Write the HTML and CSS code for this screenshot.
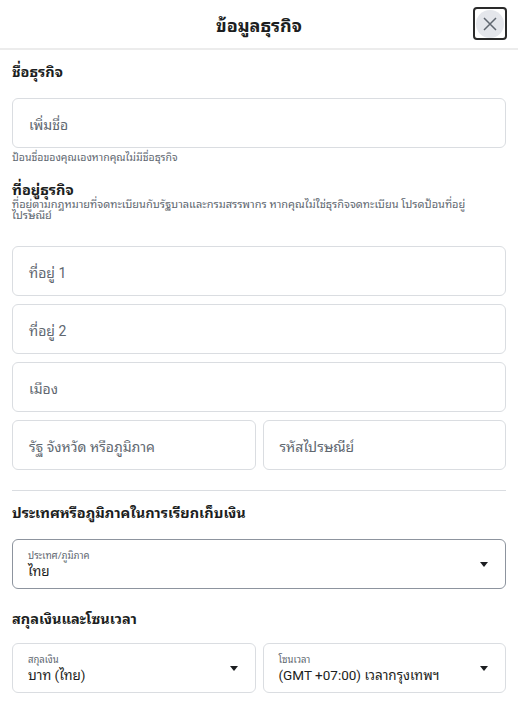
FILE: index.html
```html
<!DOCTYPE html>
<html lang="th">
<head>
<meta charset="utf-8">
<link rel="stylesheet" href="styles.css">
</head>
<body>
<div class="dialog">
  <header class="head">
    <h1 class="title">ข้อมูลธุรกิจ</h1>
    <button class="close" aria-label="close">
      <span class="close-bg">
        <svg width="14" height="14" viewBox="0 0 14 14"><path d="M1 1 L13 13 M13 1 L1 13" stroke="#606770" stroke-width="1.5" fill="none"/></svg>
      </span>
    </button>
  </header>
  <main class="body">
    <h2 class="sec">ชื่อธุรกิจ</h2>
    <div class="field"><span class="ph">เพิ่มชื่อ</span></div>
    <p class="help">ป้อนชื่อของคุณเองหากคุณไม่มีชื่อธุรกิจ</p>

    <h2 class="sec sec-addr">ที่อยู่ธุรกิจ</h2>
    <p class="desc">ที่อยู่ตามกฎหมายที่จดทะเบียนกับรัฐบาลและกรมสรรพากร หากคุณไม่ใช่ธุรกิจจดทะเบียน โปรดป้อนที่อยู่ ไปรษณีย์</p>
    <div class="stack">
      <div class="field"><span class="ph">ที่อยู่ 1</span></div>
      <div class="field"><span class="ph">ที่อยู่ 2</span></div>
      <div class="field"><span class="ph">เมือง</span></div>
      <div class="row">
        <div class="field"><span class="ph">รัฐ จังหวัด หรือภูมิภาค</span></div>
        <div class="field"><span class="ph">รหัสไปรษณีย์</span></div>
      </div>
    </div>

    <hr class="divider">

    <h2 class="sec">ประเทศหรือภูมิภาคในการเรียกเก็บเงิน</h2>
    <div class="select dark">
      <div class="sel-text"><span class="lbl">ประเทศ/ภูมิภาค</span><span class="val">ไทย</span></div>
      <span class="caret"></span>
    </div>

    <h2 class="sec sec-cur">สกุลเงินและโซนเวลา</h2>
    <div class="row">
      <div class="select">
        <div class="sel-text"><span class="lbl">สกุลเงิน</span><span class="val">บาท (ไทย)</span></div>
        <span class="caret"></span>
      </div>
      <div class="select">
        <div class="sel-text"><span class="lbl">โซนเวลา</span><span class="val">(GMT +07:00) เวลากรุงเทพฯ</span></div>
        <span class="caret"></span>
      </div>
    </div>
  </main>
</div>
</body>
</html>
```
FILE: styles.css
```css
* { box-sizing: border-box; }
html, body { margin: 0; padding: 0; background: #fff; }
body {
  font-family: Roboto, "Noto Sans Thai Looped", "Garuda", "Loma", "Noto Sans Thai", "Noto Sans", "DejaVu Sans", sans-serif;
  color: #1c1e21;
  width: 518px;
  height: 713px;
  overflow: hidden;
}
.head {
  height: 50px;
  border-bottom: 2px solid #ececec;
  display: flex;
  align-items: center;
  justify-content: center;
  position: relative;
}
.title {
  margin: 0;
  font-size: 18px;
  font-weight: 700;
}
.close {
  position: absolute;
  right: 11px;
  top: 7px;
  width: 34px;
  height: 33px;
  border: 2px solid #2a2a2a;
  border-radius: 4px;
  background: #fff;
  display: flex;
  align-items: center;
  justify-content: center;
  padding: 0;
}
.close-bg {
  width: 28px;
  height: 28px;
  border-radius: 50%;
  background: #e4e6eb;
  display: flex;
  align-items: center;
  justify-content: center;
}
.body { padding: 12px 12px 0; }
.sec {
  margin: 0;
  font-size: 14.5px;
  font-weight: 700;
  line-height: 22px;
}
.field {
  height: 50px;
  border: 1px solid #dadde1;
  border-radius: 6px;
  display: flex;
  align-items: center;
  padding: 0 16px;
}
.ph { font-size: 14px; color: #606770; }
.body > .field { margin-top: 14px; }
.help {
  margin: 4px 0 0;
  font-size: 10.5px;
  color: #606770;
  line-height: 12px;
}
.sec-addr { margin-top: 16px; }
.desc {
  margin: -3px 0 0;
  font-size: 11px;
  color: #606770;
  line-height: 11px;
  max-width: 490px;
}
.stack {
  margin-top: 25px;
  display: flex;
  flex-direction: column;
  gap: 8px;
}
.row {
  display: flex;
  gap: 7px;
}
.row > * { flex: 1; }
.divider {
  margin: 20px 0 0;
  border: 0;
  border-top: 1px solid #dadde1;
}
.divider + .sec { margin-top: 12px; }
.select {
  height: 50px;
  border: 1px solid #dadde1;
  border-radius: 6px;
  display: flex;
  align-items: center;
  padding: 0 17px 0 15px;
  margin-top: 14px;
}
.select.dark { border-color: #8d949e; }
.sel-text { flex: 1; display: flex; flex-direction: column; }
.lbl { font-size: 9.5px; color: #606770; line-height: 13px; }
.val { font-size: 13.5px; color: #1c1e21; line-height: 18px; }
.caret {
  width: 0; height: 0;
  border-left: 4.5px solid transparent;
  border-right: 4.5px solid transparent;
  border-top: 5px solid #1c1e21;
  margin-left: 8px;
}
.sec-cur { margin-top: 20px; }
.row .select { margin-top: 0; }
.sec-cur + .row { margin-top: 12px; }
```
